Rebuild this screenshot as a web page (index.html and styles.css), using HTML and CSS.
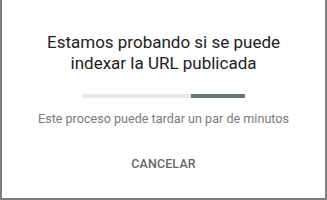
FILE: index.html
```html
<!DOCTYPE html>
<html lang="es">
<head>
	<meta charset="utf-8">
	<title>Inspección de URL</title>
	<link rel="stylesheet" href="styles.css">
</head>
<body>
	<div class="dialog">
		<div class="dialogTitle">Estamos probando si se puede indexar la URL publicada</div>
		<div class="progress">
			<div class="progressBar"></div>
		</div>
		<div class="dialogText">Este proceso puede tardar un par de minutos</div>
		<div class="actions">
			<div class="btnText">CANCELAR</div>
		</div>
	</div>
</body>
</html>
```
FILE: styles.css
```css
*, *:after, *:before {
	box-sizing: border-box;
}
html, body {
	margin: 0;
	height: 200px;
	background: #7d7d7d;
	font-family: Roboto, "Liberation Sans", sans-serif;
	overflow: hidden;
}
.dialog {
	background: #fff;
	margin: 0 2px 0 2px;
	height: 198px;
	padding-top: 32px;
	text-align: center;
}
.dialogTitle {
	font-size: 17px;
	line-height: 21px;
	color: #212121;
	padding: 0 40px;
}
.progress {
	width: 162px;
	height: 4px;
	margin: 20px 0 0 81px;
	background: #e8e8e8;
	display: flex;
	justify-content: flex-end;
}
.progressBar {
	width: 54px;
	background: #6b7478;
}
.dialogText {
	margin-top: 13px;
	font-size: 12.6px;
	color: #7a7a7a;
}
.actions {
	margin-top: 30px;
	display: flex;
	justify-content: center;
}
.btnText {
	font-size: 12.4px;
	font-weight: 500;
	letter-spacing: 0.2px;
	color: #666;
	cursor: pointer;
}
```
